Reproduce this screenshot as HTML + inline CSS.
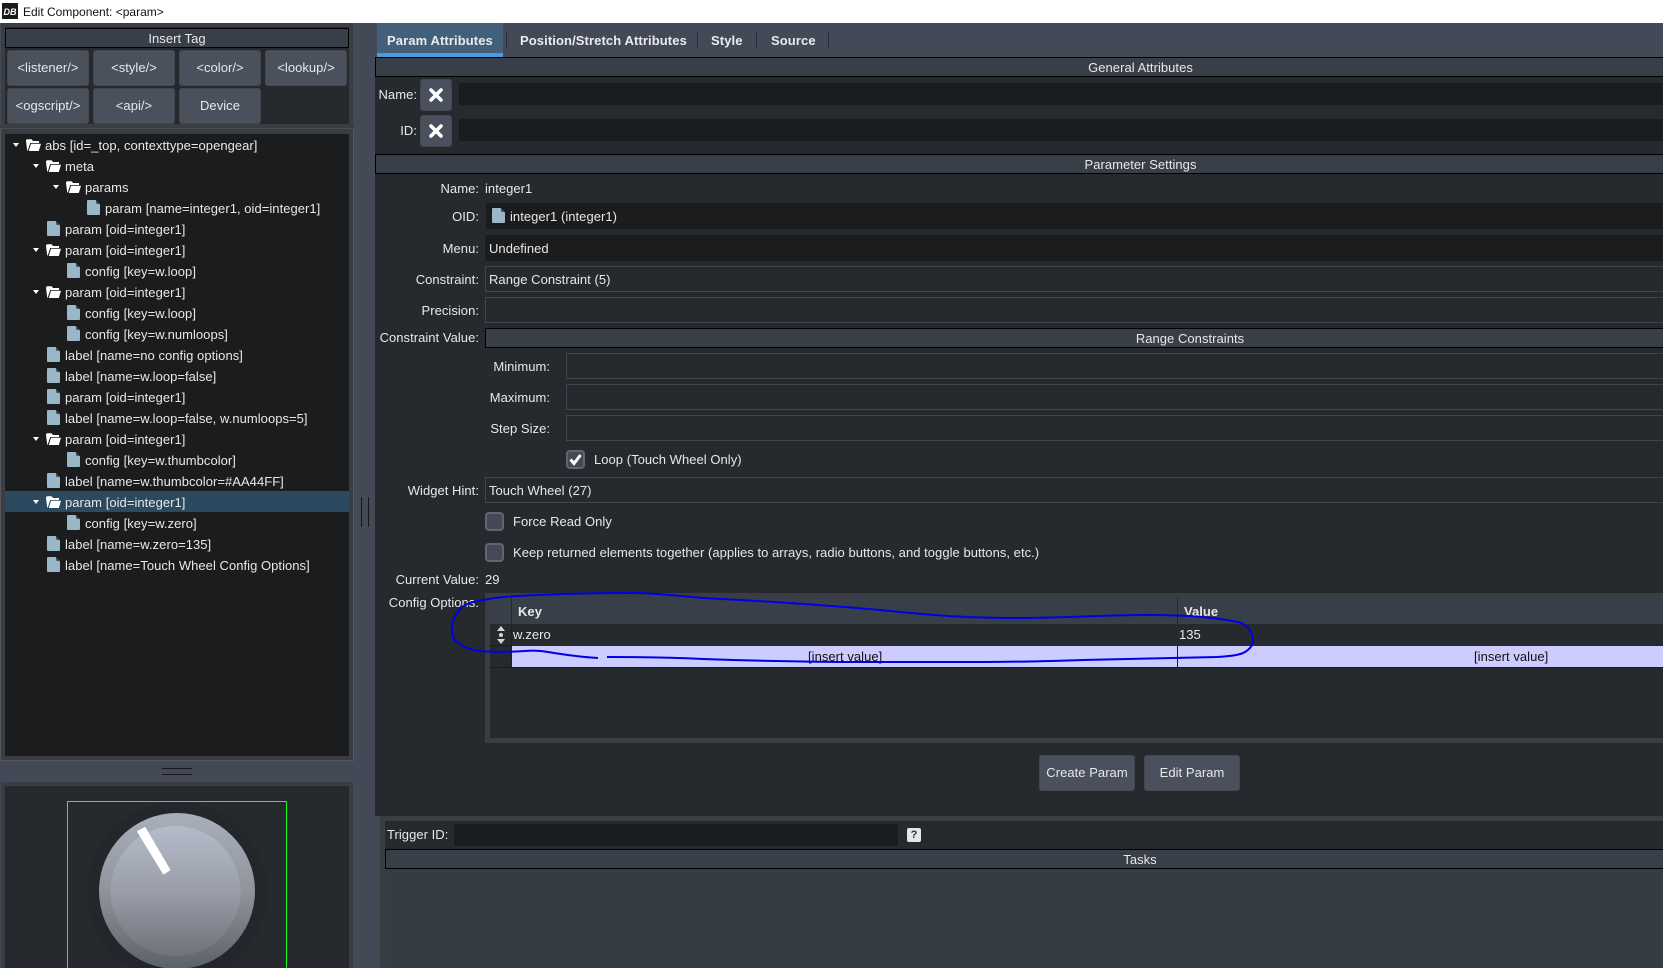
<!DOCTYPE html>
<html><head><meta charset="utf-8"><title>Edit Component</title>
<style>
html,body{margin:0;padding:0;width:1663px;height:968px;overflow:hidden;background:#434956}
body{position:relative;font-family:"Liberation Sans",sans-serif;font-size:13px;letter-spacing:.04px;color:#e8e8e8}
.b,.t,.h,.btn,.i,.ib{position:absolute;box-sizing:border-box}
.t{line-height:20px;height:20px;white-space:pre;margin-top:1px}
.h{background:#393f49;border:1px solid #000;text-align:center;line-height:20px;color:#e8e8e8}
.btn{background:#4a505c;border-radius:3px;text-align:center;color:#e8e8e8;line-height:34px;height:36px;border:1px solid #43474f}
.i{background:#1b1c1e}
.ib{border:1px solid #42454b;background:#26292e}
.tab{position:absolute;top:29px;height:24px;line-height:24px;font-weight:bold;color:#e9ebee;letter-spacing:.1px}
.sep{position:absolute;top:31px;width:1px;height:18px;background:#2a2d33}
.lb{position:absolute;text-align:right}
svg{position:absolute;overflow:visible}
.cb{position:absolute;width:19px;height:19px;box-sizing:border-box;background:#434956;border:2px solid #62666e;border-radius:4px}
</style></head><body>
<svg width="0" height="0" style="position:absolute"><defs>
<symbol id="file" viewBox="0 0 13 16"><path d="M1 0H8.500L13 4.500V14a1 1 0 0 1-1 1H1a1 1 0 0 1-1-1V1a1 1 0 0 1 1-1Z" fill="#99b7c6"/><path d="M9.200 0.200V3.800H12.800Z" fill="#33434e"/></symbol>
<symbol id="fold" viewBox="0 0 15 12"><path d="M1.200 11.500L0 2Q0 0.300 1.600 0.300H5.600L7 2H13V4H4.200L1.800 11.500Z" fill="#fff"/><path d="M2.800 12H12.800L15 4.800H5Z" fill="#fff"/></symbol>
<symbol id="arr" viewBox="0 0 6 4"><path d="M0 0H6L3 4Z" fill="#fff"/></symbol>
</defs></svg>

<!-- title bar -->
<div class="b" style="left:0;top:0;width:1663px;height:23px;background:#fff"></div>
<div class="b" style="left:2px;top:3px;width:16px;height:16px;background:#1a1a1a"></div>
<div class="t" style="left:3px;top:1px;width:14px;font-size:9px;font-weight:bold;font-style:italic;color:#fff;letter-spacing:0;text-align:center">DB</div>
<div class="t" style="left:23px;top:1px;color:#111;font-size:12px;letter-spacing:0">Edit Component: &lt;param&gt;</div>

<!-- left top panel -->
<div class="b" style="left:1px;top:23px;width:352px;height:106px;background:#26292e;border:4px solid #3a3d42;border-bottom:0"></div>
<div class="b" style="left:0;top:124px;width:354px;height:9px;background:#3a3d42"></div>
<div class="b" style="left:0;top:128px;width:354px;height:1px;background:#4a4d53"></div>
<div class="h" style="left:5px;top:28px;width:344px;height:20px">Insert Tag</div>
<div class="btn" style="left:7px;top:50px;width:82px">&lt;listener/&gt;</div>
<div class="btn" style="left:93px;top:50px;width:82px">&lt;style/&gt;</div>
<div class="btn" style="left:179px;top:50px;width:82px">&lt;color/&gt;</div>
<div class="btn" style="left:265px;top:50px;width:82px">&lt;lookup/&gt;</div>
<div class="btn" style="left:7px;top:88px;width:82px">&lt;ogscript/&gt;</div>
<div class="btn" style="left:93px;top:88px;width:82px">&lt;api/&gt;</div>
<div class="btn" style="left:179px;top:88px;width:82px">Device</div>

<!-- tree -->
<div class="b" style="left:0;top:129px;width:354px;height:632px;background:#3a3d42;border-right:1px solid #55585f;border-left:1px solid #55585f;border-bottom:1px solid #55585f"></div>
<div class="b" style="left:5px;top:134px;width:344px;height:622px;background:#1b1c1e"></div>
<div class="b" style="left:5px;top:491px;width:344px;height:21px;background:#2b4a60"></div>

<svg style="left:13px;top:143px" width="6" height="4"><use href="#arr"/></svg><svg style="left:26px;top:139px" width="15" height="12"><use href="#fold"/></svg><div class="t" style="left:45px;top:135px">abs [id=_top, contexttype=opengear]</div>
<svg style="left:33px;top:164px" width="6" height="4"><use href="#arr"/></svg><svg style="left:46px;top:160px" width="15" height="12"><use href="#fold"/></svg><div class="t" style="left:65px;top:156px">meta</div>
<svg style="left:53px;top:185px" width="6" height="4"><use href="#arr"/></svg><svg style="left:66px;top:181px" width="15" height="12"><use href="#fold"/></svg><div class="t" style="left:85px;top:177px">params</div>
<svg style="left:87px;top:200px" width="13" height="16"><use href="#file"/></svg><div class="t" style="left:105px;top:198px">param [name=integer1, oid=integer1]</div>
<svg style="left:47px;top:221px" width="13" height="16"><use href="#file"/></svg><div class="t" style="left:65px;top:219px">param [oid=integer1]</div>
<svg style="left:33px;top:248px" width="6" height="4"><use href="#arr"/></svg><svg style="left:46px;top:244px" width="15" height="12"><use href="#fold"/></svg><div class="t" style="left:65px;top:240px">param [oid=integer1]</div>
<svg style="left:67px;top:263px" width="13" height="16"><use href="#file"/></svg><div class="t" style="left:85px;top:261px">config [key=w.loop]</div>
<svg style="left:33px;top:290px" width="6" height="4"><use href="#arr"/></svg><svg style="left:46px;top:286px" width="15" height="12"><use href="#fold"/></svg><div class="t" style="left:65px;top:282px">param [oid=integer1]</div>
<svg style="left:67px;top:305px" width="13" height="16"><use href="#file"/></svg><div class="t" style="left:85px;top:303px">config [key=w.loop]</div>
<svg style="left:67px;top:326px" width="13" height="16"><use href="#file"/></svg><div class="t" style="left:85px;top:324px">config [key=w.numloops]</div>
<svg style="left:47px;top:347px" width="13" height="16"><use href="#file"/></svg><div class="t" style="left:65px;top:345px">label [name=no config options]</div>
<svg style="left:47px;top:368px" width="13" height="16"><use href="#file"/></svg><div class="t" style="left:65px;top:366px">label [name=w.loop=false]</div>
<svg style="left:47px;top:389px" width="13" height="16"><use href="#file"/></svg><div class="t" style="left:65px;top:387px">param [oid=integer1]</div>
<svg style="left:47px;top:410px" width="13" height="16"><use href="#file"/></svg><div class="t" style="left:65px;top:408px">label [name=w.loop=false, w.numloops=5]</div>
<svg style="left:33px;top:437px" width="6" height="4"><use href="#arr"/></svg><svg style="left:46px;top:433px" width="15" height="12"><use href="#fold"/></svg><div class="t" style="left:65px;top:429px">param [oid=integer1]</div>
<svg style="left:67px;top:452px" width="13" height="16"><use href="#file"/></svg><div class="t" style="left:85px;top:450px">config [key=w.thumbcolor]</div>
<svg style="left:47px;top:473px" width="13" height="16"><use href="#file"/></svg><div class="t" style="left:65px;top:471px">label [name=w.thumbcolor=#AA44FF]</div>
<svg style="left:33px;top:500px" width="6" height="4"><use href="#arr"/></svg><svg style="left:46px;top:496px" width="15" height="12"><use href="#fold"/></svg><div class="t" style="left:65px;top:492px">param [oid=integer1]</div>
<svg style="left:67px;top:515px" width="13" height="16"><use href="#file"/></svg><div class="t" style="left:85px;top:513px">config [key=w.zero]</div>
<svg style="left:47px;top:536px" width="13" height="16"><use href="#file"/></svg><div class="t" style="left:65px;top:534px">label [name=w.zero=135]</div>
<svg style="left:47px;top:557px" width="13" height="16"><use href="#file"/></svg><div class="t" style="left:65px;top:555px">label [name=Touch Wheel Config Options]</div>

<!-- horizontal splitter grip -->
<div class="b" style="left:162px;top:768px;width:30px;height:1px;background:#17181a"></div>
<div class="b" style="left:162px;top:774px;width:30px;height:1px;background:#17181a"></div>
<!-- vertical splitter grip -->
<div class="b" style="left:361px;top:497px;width:1px;height:30px;background:#17181a"></div>
<div class="b" style="left:368px;top:497px;width:1px;height:30px;background:#17181a"></div>

<!-- preview -->
<div class="b" style="left:1px;top:782px;width:352px;height:186px;background:#26292e;border:4px solid #3a3d42;border-bottom:0"></div>
<svg style="left:0;top:0" width="354" height="968">
<defs>
<linearGradient id="g1" x1="0" y1="0" x2="0" y2="1"><stop offset="0" stop-color="#a8afbb"/><stop offset=".5" stop-color="#90949d"/><stop offset="1" stop-color="#5c6068"/></linearGradient>
<linearGradient id="g2" x1="0" y1="0" x2="0" y2="1"><stop offset="0" stop-color="#b5bbc9"/><stop offset=".5" stop-color="#999ea8"/><stop offset="1" stop-color="#6f727a"/></linearGradient>
</defs>
<rect x="67.500" y="801.500" width="219" height="180" fill="none" stroke="#17ff17" stroke-width="1"/>
<circle cx="177" cy="892" r="90" fill="#23272b"/>
<circle cx="177" cy="891" r="78" fill="url(#g1)"/>
<circle cx="175.500" cy="891" r="65" fill="url(#g2)"/>
<path d="M137.500 831.500L145 827.500L170 870L163.500 874Z" fill="#fff" stroke="#fff" stroke-width="1" stroke-linejoin="round"/>
</svg>

<!-- right main -->
<div class="b" style="left:375px;top:57px;width:1288px;height:759px;background:#26292e"></div>

<!-- tabs -->
<div class="b" style="left:377px;top:23px;width:126px;height:34px;background:#426079"></div>
<div class="b" style="left:377px;top:53px;width:126px;height:4px;background:#4a9bdf"></div>
<div class="tab" style="left:387px">Param Attributes</div>
<div class="sep" style="left:506px"></div>
<div class="tab" style="left:520px">Position/Stretch Attributes</div>
<div class="sep" style="left:697px"></div>
<div class="tab" style="left:711px">Style</div>
<div class="sep" style="left:756px"></div>
<div class="tab" style="left:771px">Source</div>
<div class="sep" style="left:828px"></div>

<div class="h" style="left:375px;top:57px;width:1531px;height:20px">General Attributes</div>
<div class="t lb" style="left:375px;width:42px;top:84px">Name:</div>
<div class="btn" style="left:420px;top:79px;width:32px;height:32px"></div>
<svg style="left:429px;top:88px" width="14" height="14"><path d="M2 2L12 12M12 2L2 12" stroke="#fff" stroke-width="3.600" stroke-linecap="round"/></svg>
<div class="i" style="left:459px;top:83px;width:1204px;height:22px"></div>
<div class="t lb" style="left:375px;width:42px;top:120px">ID:</div>
<div class="btn" style="left:420px;top:115px;width:32px;height:32px"></div>
<svg style="left:429px;top:124px" width="14" height="14"><path d="M2 2L12 12M12 2L2 12" stroke="#fff" stroke-width="3.600" stroke-linecap="round"/></svg>
<div class="i" style="left:459px;top:119px;width:1204px;height:22px"></div>

<div class="h" style="left:375px;top:154px;width:1531px;height:20px">Parameter Settings</div>

<div class="t lb" style="left:375px;width:104px;top:178px">Name:</div>
<div class="t" style="left:485px;top:178px">integer1</div>

<div class="t lb" style="left:375px;width:104px;top:206px">OID:</div>
<div class="i" style="left:486px;top:203px;width:1177px;height:26px"></div>
<svg style="left:492px;top:208px" width="13" height="16"><use href="#file"/></svg>
<div class="t" style="left:510px;top:206px">integer1 (integer1)</div>

<div class="t lb" style="left:375px;width:104px;top:238px">Menu:</div>
<div class="i" style="left:485px;top:235px;width:1178px;height:26px"></div>
<div class="t" style="left:489px;top:238px">Undefined</div>

<div class="t lb" style="left:375px;width:104px;top:269px">Constraint:</div>
<div class="ib" style="left:485px;top:266px;width:1190px;height:26px"></div>
<div class="t" style="left:489px;top:269px">Range Constraint (5)</div>

<div class="t lb" style="left:375px;width:104px;top:300px">Precision:</div>
<div class="ib" style="left:485px;top:297px;width:1190px;height:26px"></div>

<div class="t lb" style="left:375px;width:104px;top:327px">Constraint Value:</div>
<div class="h" style="left:485px;top:328px;width:1410px;height:20px">Range Constraints</div>

<div class="t lb" style="left:440px;width:110px;top:356px">Minimum:</div>
<div class="ib" style="left:566px;top:353px;width:1110px;height:26px"></div>
<div class="t lb" style="left:440px;width:110px;top:387px">Maximum:</div>
<div class="ib" style="left:566px;top:384px;width:1110px;height:26px"></div>
<div class="t lb" style="left:440px;width:110px;top:418px">Step Size:</div>
<div class="ib" style="left:566px;top:415px;width:1110px;height:26px"></div>

<div class="cb" style="left:566px;top:450px"></div>
<svg style="left:566px;top:450px" width="19" height="19"><path d="M4.500 9.500L8 13.500L14.500 5" fill="none" stroke="#fff" stroke-width="3"/></svg>
<div class="t" style="left:594px;top:449px">Loop (Touch Wheel Only)</div>

<div class="t lb" style="left:375px;width:104px;top:480px">Widget Hint:</div>
<div class="ib" style="left:485px;top:477px;width:1190px;height:26px"></div>
<div class="t" style="left:489px;top:480px">Touch Wheel (27)</div>

<div class="cb" style="left:485px;top:512px"></div>
<div class="t" style="left:513px;top:511px">Force Read Only</div>
<div class="cb" style="left:485px;top:543px"></div>
<div class="t" style="left:513px;top:542px">Keep returned elements together (applies to arrays, radio buttons, and toggle buttons, etc.)</div>

<div class="t lb" style="left:375px;width:104px;top:569px">Current Value:</div>
<div class="t" style="left:485px;top:569px">29</div>
<div class="t lb" style="left:375px;width:104px;top:592px">Config Options:</div>

<!-- table -->
<div class="b" style="left:485px;top:593px;width:1200px;height:150px;background:#3a3d42"></div>
<div class="b" style="left:490px;top:597px;width:1190px;height:141px;background:#26292e"></div>
<div class="b" style="left:490px;top:597px;width:1190px;height:27px;background:#393f49"></div>
<div class="b" style="left:511px;top:597px;width:1px;height:27px;background:#26292e"></div>
<div class="b" style="left:1177px;top:597px;width:1px;height:27px;background:#26292e"></div>
<div class="t" style="left:518px;top:601px;font-weight:bold">Key</div>
<div class="t" style="left:1184px;top:601px;font-weight:bold">Value</div>
<svg style="left:495px;top:625px" width="12" height="20"><path d="M6 1L10 6H2Z" fill="#d5d5d5"/><circle cx="6" cy="10" r="2" fill="#d5d5d5"/><path d="M6 19L10 14H2Z" fill="#d5d5d5"/></svg>
<div class="t" style="left:513px;top:624px">w.zero</div>
<div class="t" style="left:1179px;top:624px">135</div>
<div class="b" style="left:490px;top:645px;width:22px;height:1px;background:#1b1c1e"></div>
<div class="b" style="left:490px;top:667px;width:1190px;height:1px;background:#1b1c1e"></div>
<div class="b" style="left:512px;top:646px;width:1151px;height:21px;background:#ccccff"></div>
<div class="b" style="left:511px;top:624px;width:1px;height:43px;background:#1f2125"></div>
<div class="b" style="left:1177px;top:646px;width:1px;height:21px;background:#1b1c1e"></div>
<div class="t" style="left:808px;top:646px;color:#111">[insert value]</div>
<div class="t" style="left:1474px;top:646px;color:#111">[insert value]</div>

<!-- buttons -->
<div class="btn" style="left:1039px;top:755px;width:96px">Create Param</div>
<div class="btn" style="left:1144px;top:755px;width:96px">Edit Param</div>

<!-- lower panel -->
<div class="b" style="left:380px;top:816px;width:1283px;height:152px;background:#3a3d42"></div>
<div class="b" style="left:385px;top:821px;width:1278px;height:147px;background:#363c44"></div>
<div class="b" style="left:385px;top:821px;width:1278px;height:28px;background:#26292e"></div>
<div class="t" style="left:387px;top:824px">Trigger ID:</div>
<div class="i" style="left:454px;top:824px;width:444px;height:22px"></div>
<div class="b" style="left:907px;top:828px;width:14px;height:14px;background:#e6e6e6;border-radius:2px;color:#333;font-size:11px;font-weight:bold;text-align:center;line-height:14px;letter-spacing:0">?</div>
<div class="h" style="left:385px;top:849px;width:1510px;height:20px">Tasks</div>

<!-- annotation -->
<svg style="left:0;top:0" width="1663" height="968">
<path d="M1253 640C1253 632 1247 625 1240 622.500C1215 617 1180 615 1150 615C1105 615 1060 618 1010 618C965 618 935 615 900 612C860 608 800 603 703 598C670 595 650 593 630 593C590 593 560 594 537 595C515 596 497 597 483 600C470 602 462 605 458 612C453 618 452 624 452 628C452 635 453 639 457 642C463 647 471 650 480 651C492 652 510 652 525 651C535 650 543 651 548 652C560 654 580 657 598 658" fill="none" stroke="#0000e6" stroke-width="2"/>
<path d="M607 657C640 657 680 658 703 659C760 661 810 662 870 662C930 662 960 662 983 662C1020 662 1050 661 1083 660C1120 659 1180 658 1217 657C1232 656 1240 655 1245 652C1250 649 1253 645 1253 640" fill="none" stroke="#0000e6" stroke-width="2"/>
</svg>
</body></html>
